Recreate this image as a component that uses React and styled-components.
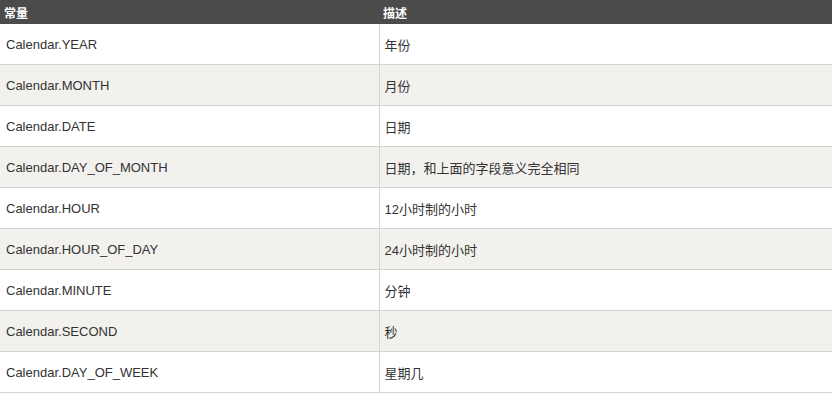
import React from 'react';
import styled, { createGlobalStyle } from 'styled-components';

const GlobalStyle = createGlobalStyle`
  body {
    margin: 0;
    background: #fff;
    font-family: "Liberation Sans", Arial, "Noto Sans CJK SC", sans-serif;
  }
`;

const Table = styled.table`
  width: 832px;
  border-collapse: collapse;
  table-layout: fixed;
  font-size: 13px;
  color: #333;
`;

const HeadCell = styled.th`
  height: 24px;
  padding: 0 4px;
  background: #4b4b4b;
  color: #fff;
  font-size: 12px;
  font-weight: bold;
  text-align: left;
  vertical-align: middle;
  &:first-child { width: 371px; }
`;

const Row = styled.tr`
  background: ${p => (p.$alt ? '#f2f1ee' : '#fff')};
  border-bottom: 1px solid #d4d4d4;
`;

const Cell = styled.td`
  height: 40px;
  padding: 0 6px;
  vertical-align: middle;
  & + & { border-left: 1px solid #d4d4d4; padding-left: 5px; }
`;

const rows = [
  ['Calendar.YEAR', '年份'],
  ['Calendar.MONTH', '月份'],
  ['Calendar.DATE', '日期'],
  ['Calendar.DAY_OF_MONTH', '日期，和上面的字段意义完全相同'],
  ['Calendar.HOUR', '12小时制的小时'],
  ['Calendar.HOUR_OF_DAY', '24小时制的小时'],
  ['Calendar.MINUTE', '分钟'],
  ['Calendar.SECOND', '秒'],
  ['Calendar.DAY_OF_WEEK', '星期几'],
];

const App = () => (
  <>
    <GlobalStyle />
    <Table>
      <thead>
        <tr>
          <HeadCell>常量</HeadCell>
          <HeadCell>描述</HeadCell>
        </tr>
      </thead>
      <tbody>
        {rows.map(([name, desc], i) => (
          <Row key={name} $alt={i % 2 === 1}>
            <Cell>{name}</Cell>
            <Cell>{desc}</Cell>
          </Row>
        ))}
      </tbody>
    </Table>
  </>
);

export default App;
